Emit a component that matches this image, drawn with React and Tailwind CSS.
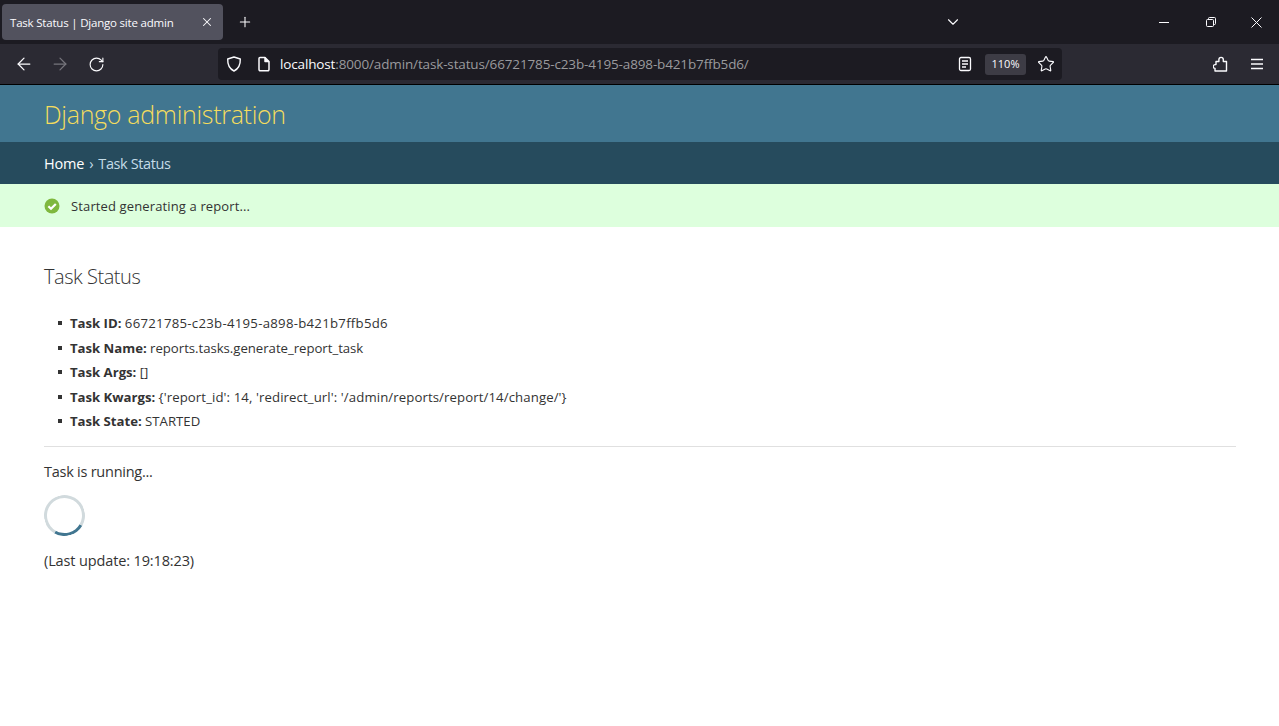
import React from 'react'
import { X, Plus, ChevronDown, ArrowLeft, ArrowRight, RotateCw, Star } from 'lucide-react'

const FONT = "font-['Open_Sans','Noto_Sans',sans-serif]"

function Shield() {
  return (
    <svg width="16" height="16" viewBox="0 0 16 16" fill="none" stroke="#fbfbfe" strokeWidth="1.4" strokeLinejoin="round">
      <path d="M8 1 L14.3 3 C14.5 8.5 12.5 12.8 8 15 C3.5 12.8 1.5 8.5 1.7 3 Z" />
    </svg>
  )
}

function PageIcon() {
  return (
    <svg width="16" height="16" viewBox="0 0 16 16" fill="none" stroke="#fbfbfe" strokeWidth="1.5" strokeLinejoin="round">
      <path d="M3 2.5 a1 1 0 0 1 1 -1 h5 l4 4 v8 a1.2 1.2 0 0 1 -1.2 1.2 h-7.6 a1.2 1.2 0 0 1 -1.2 -1.2 Z" />
      <path d="M9 1.5 v4 h4" fill="#fbfbfe" />
    </svg>
  )
}

function ReaderIcon() {
  return (
    <svg width="14" height="16" viewBox="0 0 14 16" fill="none" stroke="#fbfbfe" strokeWidth="1.3">
      <rect x="1.5" y="1.5" width="11" height="13" rx="1.5" />
      <path d="M4 5h6M4 8h6M4 11h4" />
    </svg>
  )
}

function Puzzle() {
  return (
    <svg width="16" height="16" viewBox="0 0 16 16" fill="none" stroke="#fbfbfe" strokeWidth="1.4" strokeLinejoin="round">
      <path d="M2 15 H13.5 V5.5 H10.3 V3.6 a2.2 2.2 0 0 0 -4.4 0 V5.5 H3 V8.6 H2.1 a1.9 1.9 0 0 0 0 3.8 H2 Z" />
    </svg>
  )
}

function RestoreIcon() {
  return (
    <svg width="10" height="10" viewBox="0 0 10 10" fill="none" stroke="#fbfbfe" strokeWidth="1">
      <rect x="0.5" y="2.5" width="7" height="7" rx="1" />
      <path d="M2.5 2.5 V1.5 a1 1 0 0 1 1 -1 h5 a1 1 0 0 1 1 1 v5 a1 1 0 0 1 -1 1 h-1" />
    </svg>
  )
}

function MinimizeIcon() {
  return (
    <svg width="10" height="10" viewBox="0 0 10 10" stroke="#fbfbfe" strokeWidth="1">
      <path d="M0 5.5 H10" />
    </svg>
  )
}

function CloseIcon() {
  return (
    <svg width="11" height="11" viewBox="0 0 11 11" stroke="#fbfbfe" strokeWidth="1">
      <path d="M0.5 0.5 L10.5 10.5 M10.5 0.5 L0.5 10.5" />
    </svg>
  )
}

function MenuIcon() {
  return (
    <svg width="14" height="12" viewBox="0 0 14 12" stroke="#fbfbfe" strokeWidth="1.3">
      <path d="M1 1.5 H13 M1 6 H13 M1 10.5 H13" />
    </svg>
  )
}

function CheckBadge() {
  return (
    <svg width="16" height="16" viewBox="0 0 16 16">
      <circle cx="8" cy="8" r="7.5" fill="#7fb83e" />
      <path d="M4.4 8.2 L7 10.8 L11.8 5.9" fill="none" stroke="#ffffff" strokeWidth="2.2" />
    </svg>
  )
}

const ROWS = [
  ['Task ID:', '66721785-c23b-4195-a898-b421b7ffb5d6', 'tracking-[0.27px]'],
  ['Task Name:', 'reports.tasks.generate_report_task', 'tracking-[-0.03px]'],
  ['Task Args:', '[]', 'tracking-[0px]'],
  ['Task Kwargs:', "{'report_id': 14, 'redirect_url': '/admin/reports/report/14/change/'}", 'tracking-[0.1px]'],
  ['Task State:', 'STARTED', 'tracking-[0px]'],
]

export default function App() {
  return (
    <div className={`h-[726px] overflow-hidden bg-white flex flex-col ${FONT}`}>
      {/* tab strip */}
      <div className="h-[44px] bg-[#1c1b22] flex items-center pl-[2px] text-[#fbfbfe]">
        <div className="w-[221px] h-[36px] bg-[#52525e] rounded-[4px] flex items-center pl-[8px] pr-[9px] justify-between">
          <span className="pt-[1px] text-[11.5px] tracking-[-0.2px] whitespace-nowrap">Task Status | Django site admin</span>
          <X size={14} strokeWidth={1.8} />
        </div>
        <Plus size={16} strokeWidth={1.6} className="ml-[14px]" />
        <div className="flex-1" />
        <ChevronDown size={18} strokeWidth={1.5} className="mr-[197px]" />
        <MinimizeIcon />
        <span className="w-[37px]" />
        <RestoreIcon />
        <span className="w-[35px]" />
        <CloseIcon />
        <span className="w-[17px]" />
      </div>

      {/* toolbar */}
      <div className="h-[41px] bg-[#2b2a33] border-b border-black flex items-center text-[#fbfbfe]">
        <ArrowLeft size={20} strokeWidth={1.5} className="ml-[14px]" />
        <ArrowRight size={20} strokeWidth={1.5} className="ml-[16px] text-[#77767d]" />
        <RotateCw size={17} strokeWidth={1.6} className="ml-[18px]" />
        <div className="ml-[113px] w-[844px] h-[32px] bg-[#1c1b22] rounded-[4px] flex items-center pl-[8px] pr-[7px]">
          <Shield />
          <span className="ml-[14px]"><PageIcon /></span>
          <span className="ml-[8px] text-[13.5px] tracking-[-0.14px] whitespace-nowrap">
            localhost<span className="text-[#9a9a9d]">:8000/admin/task-status/66721785-c23b-4195-a898-b421b7ffb5d6/</span>
          </span>
          <div className="flex-1" />
          <ReaderIcon />
          <span className="ml-[13px] w-[41px] h-[21px] bg-[#3d3c45] rounded-[3px] flex items-center justify-center text-[11px]">110%</span>
          <Star size={18} strokeWidth={1.5} className="ml-[11px]" />
        </div>
        <div className="flex-1" />
        <Puzzle />
        <span className="ml-[21px] mr-[15px]"><MenuIcon /></span>
      </div>

      {/* django header */}
      <div className="h-[57px] bg-[#417690] flex items-center px-[44px] pt-[3px]">
        <h1 className="text-[25px] font-light text-[#f5dd5d] tracking-[-0.3px]">Django administration</h1>
      </div>
      <div className="h-[42px] bg-[#264b5d] flex items-center px-[44px] pt-[2px] text-[14.5px] text-[#c4dce8] tracking-[-0.2px]">
        <a className="text-white">Home</a>
        <span className="mx-[5px]">›</span>
        <span className="tracking-[-0.4px]">Task Status</span>
      </div>
      <div className="h-[43px] bg-[#ddffdd] flex items-center px-[44px] text-[13px] text-[#333333] tracking-[0.13px]">
        <CheckBadge />
        <span className="ml-[11px] pt-[2px]">Started generating a report...</span>
      </div>

      {/* content */}
      <div className="pl-[44px] pr-[43px] pt-[35px] text-[#333333]">
        <h2 className="text-[20px] font-light leading-[30px] tracking-[-0.45px]">Task Status</h2>
        <ul className="mt-[19px] pb-[12.5px] border-b border-[#e0e0e0] pl-[26px] text-[13.2px] leading-[24.5px]">
          {ROWS.map(([label, value, spacing]) => (
            <li key={label} className="relative whitespace-nowrap">
              <span className="absolute left-[-12px] top-[10px] w-[4px] h-[4px] bg-[#333333]" />
              <b className="font-bold tracking-[-0.03px]">{label}</b> <span className={spacing}>{value}</span>
            </li>
          ))}
        </ul>
        <p className="mt-[13px] text-[14.5px] leading-[24px] tracking-[-0.25px]">Task is running...</p>
        <div className="mt-[11px] w-[41px] h-[41px] rounded-full border-[3px] border-[#d1dadd] border-b-[#417690] -rotate-[15deg]" />
        <p className="mt-[13px] text-[14.5px] leading-[24px] tracking-[-0.13px]">(Last update: 19:18:23)</p>
      </div>
    </div>
  )
}
